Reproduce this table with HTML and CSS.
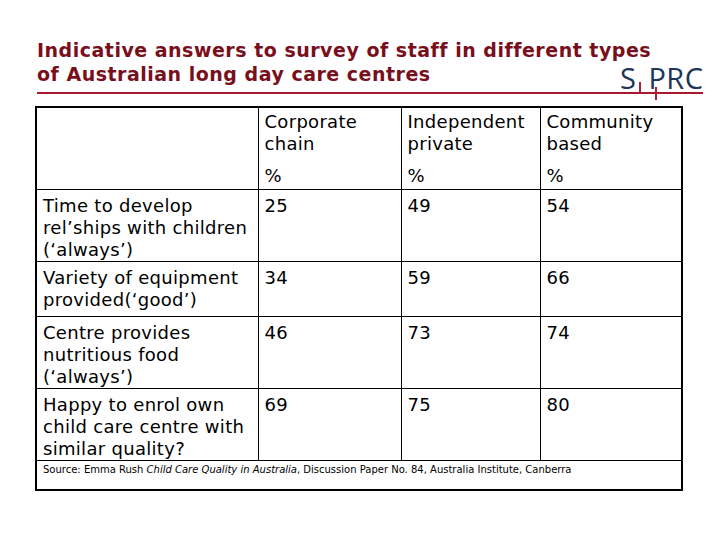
FILE: index.html
```html
<!DOCTYPE html>
<html lang="en">
<head>
<meta charset="utf-8">
<title>Indicative answers to survey of staff</title>
<link rel="stylesheet" href="styles.css">
</head>
<body>
<div class="slide">
  <div class="head">
    <h1 class="title">Indicative answers to survey of staff in different types<br>of Australian long day care centres</h1>
    <div class="logo">
      <span class="logo-text">S<span class="gap"></span>PRC</span>
      <span class="tick tick1"></span>
      <span class="tick tick2"></span>
    </div>
  </div>
  <div class="rule"></div>
  <table class="data">
    <colgroup>
      <col class="c1"><col class="c2"><col class="c3"><col class="c4">
    </colgroup>
    <tr class="r-head">
      <td></td>
      <td><div>Corporate chain</div><div class="pct">%</div></td>
      <td><div>Independent private</div><div class="pct">%</div></td>
      <td><div>Community based</div><div class="pct">%</div></td>
    </tr>
    <tr class="r-tall">
      <td>Time to develop rel’ships with children (‘always’)</td>
      <td>25</td><td>49</td><td>54</td>
    </tr>
    <tr class="r-short">
      <td>Variety of equipment provided(‘good’)</td>
      <td>34</td><td>59</td><td>66</td>
    </tr>
    <tr class="r-tall">
      <td>Centre provides nutritious food (‘always’)</td>
      <td>46</td><td>73</td><td>74</td>
    </tr>
    <tr class="r-tall">
      <td>Happy to enrol own child care centre with similar quality?</td>
      <td>69</td><td>75</td><td>80</td>
    </tr>
    <tr class="r-src">
      <td colspan="4">Source: Emma Rush <i>Child Care Quality in Australia</i>, Discussion Paper No. 84, Australia Institute, Canberra</td>
    </tr>
  </table>
</div>
</body>
</html>
```
FILE: styles.css
```css
html, body {
  margin: 0;
  padding: 0;
  background: #ffffff;
}
.slide {
  width: 720px;
  height: 540px;
  position: relative;
  font-family: "DejaVu Sans", Verdana, sans-serif;
  color: #000;
}
.head {
  position: relative;
  padding: 38px 0 0 37px;
  height: 54px;
}
.title {
  margin: 0;
  font-size: 19px;
  line-height: 24px;
  font-weight: bold;
  color: #7a0f1c;
  letter-spacing: 0.5px;
}
.logo {
  position: absolute;
  left: 620px;
  top: 67px;
  width: 90px;
  height: 34px;
}
.logo-text {
  display: block;
  font-family: "Open Sans", "DejaVu Sans", sans-serif;
  font-size: 29px;
  line-height: 22px;
  color: #1d3557;
  letter-spacing: 0.5px;
}
.gap {
  display: inline-block;
  width: 12px;
}
.tick {
  position: absolute;
  width: 2px;
  background: #b01e35;
}
.tick1 {
  left: 19px;
  top: 15px;
  height: 11px;
}
.tick2 {
  left: 35px;
  top: 20px;
  height: 13px;
}
.rule {
  margin-left: 37px;
  width: 666px;
  height: 2px;
  background: #a8182f;
}
.data {
  margin: 12px 0 0 35px;
  width: 646px;
  border-collapse: collapse;
  table-layout: fixed;
  border: 2px solid #000;
  font-size: 18px;
  line-height: 22px;
  letter-spacing: 0.3px;
}
.c1 { width: 222px; }
.c2 { width: 143px; }
.c3 { width: 139px; }
.c4 { width: 142px; }
.data td {
  border: 1px solid #000;
  vertical-align: top;
  padding: 5px 5px 0 6px;
}
.r-head { height: 82px; }
.r-head td { padding-top: 3px; }
.pct { margin-top: 10px; }
.r-tall { height: 72px; }
.r-short { height: 55px; }
.r-src { height: 30px; }
.data .r-src td {
  font-size: 10px;
  line-height: 14px;
  letter-spacing: 0px;
  padding-top: 2px;
}
```
